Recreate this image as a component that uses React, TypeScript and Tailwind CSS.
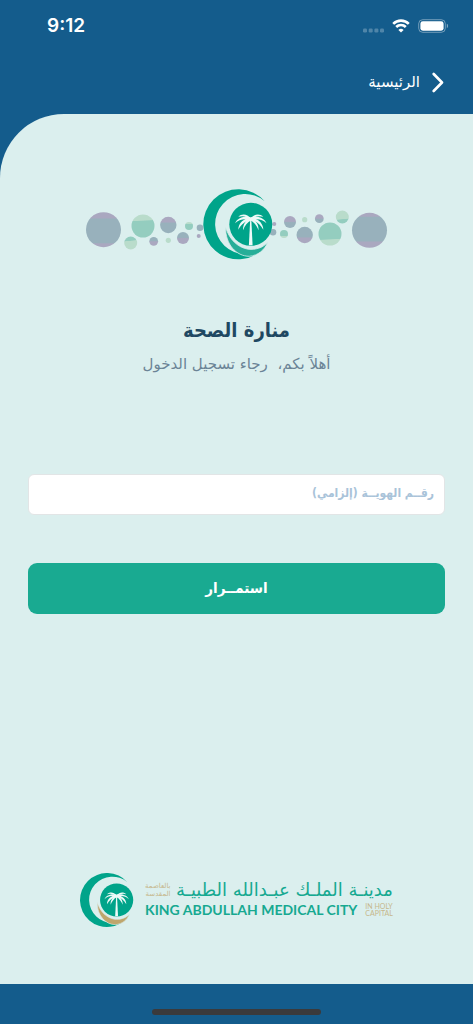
import { useState } from "react";
import type React from "react";

const arabicFont = "font-['DejaVu_Sans',sans-serif]";
const arabicCondensed = "font-['DejaVu_Sans_Condensed','DejaVu_Sans',sans-serif]";

function StatusBar() {
  return (
    <div dir="ltr" className="flex h-[52px] items-center justify-between pl-[47px] pr-6 text-white">
      <span className="font-['Inter',sans-serif] text-[19px] font-semibold leading-6">9:12</span>
      <div className="flex items-center gap-2">
        <svg width="22" height="14" viewBox="0 0 22 14" fill="#fff" fillOpacity="0.25" aria-hidden="true">
          <rect x="1" y="9.500" width="4" height="4" rx="1.2" />
          <rect x="6.700" y="9.500" width="4" height="4" rx="1.2" />
          <rect x="12.400" y="9.500" width="4" height="4" rx="1.2" />
          <rect x="18" y="9.500" width="4" height="4" rx="1.2" />
        </svg>
        <svg width="18" height="14" viewBox="0 0 18 14" fill="none" stroke="#fff" aria-hidden="true">
          <path d="M1.2 4.9a11 11 0 0 1 15.6 0" strokeWidth="2.6" />
          <path d="M4.2 8a6.8 6.8 0 0 1 9.6 0" strokeWidth="2.6" />
          <path d="M9 13.6 6.4 11a3.7 3.7 0 0 1 5.2 0Z" fill="#fff" stroke="none" />
        </svg>
        <svg width="31" height="14" viewBox="0 0 31 14" aria-hidden="true">
          <rect x="0.7" y="0.7" width="26.6" height="12.6" rx="4" fill="none" stroke="#fff" strokeOpacity="0.4" />
          <rect x="2.4" y="2.3" width="23.2" height="9.4" rx="2.4" fill="#fff" />
          <path d="M28.8 4.8c1.7.6 1.7 3.8 0 4.4Z" fill="#fff" fillOpacity="0.45" />
        </svg>
      </div>
    </div>
  );
}

// Crescent, disc and palm on a 70x70 grid
function EmblemShapes({ swoosh }: { swoosh: string }) {
  return (
    <>
      <path d="M61.4 12A35 35 0 1 0 63 56A30 30 0 1 1 61.4 12Z" fill="#00a48a" />
      <path d="M22.3 38C22 55 33 67 46 67C55 66 61 61 64.5 53C59 59 52 60.500 45 60C34 58 26 50 22.300 38Z" fill={swoosh} stroke="#dbefee" strokeWidth="0.8" />
      <circle cx="47.500" cy="35" r="21.500" fill="#00a48a" />
      <g fill="#eefaf8">
        <path d="M46.900 30h1.100l1.300 26h-3.700Z" />
        <path d="M47.500 29C44 24.500 38.500 24 35 27.500C39.500 26 43.500 27 47.500 30.500Z" />
        <path d="M47.500 28C43 26.500 34 27.500 31.800 34C36 29.500 42 29 47.500 31Z" />
        <path d="M47 28.500C41 29 35 33.500 35 40.500C38 35 42 31.500 47.500 31Z" />
        <path d="M47.300 29C42.500 31 39.500 35 39.700 41C41.500 36.500 44 33 48 31Z" />
        <path d="M47.500 29C51 24.500 56.500 24 60 27.500C55.500 26 51.500 27 47.500 30.500Z" />
        <path d="M47.500 28C52 26.500 61 27.500 63.200 34C59 29.500 53 29 47.500 31Z" />
        <path d="M48 28.500C54 29 60 33.500 60 40.500C57 35 53 31.500 47.500 31Z" />
        <path d="M47.700 29C52.500 31 55.500 35 55.300 41C53.500 36.500 51 33 47 31Z" />
      </g>
    </>
  );
}

function BubbleTrail() {
  return (
    <>
      <circle cx="17.500" cy="40.700" r="17.500" fill="url(#bigBubble)" />
      <circle cx="57" cy="37" r="11.500" fill="url(#greenBubble)" />
      <circle cx="44.700" cy="54" r="6.500" fill="url(#limeBubble)" />
      <circle cx="82.300" cy="36" r="8.200" fill="url(#greyBubble)" />
      <circle cx="67.700" cy="52.300" r="4.400" fill="url(#mauveBubble)" />
      <circle cx="82.300" cy="51.300" r="2.600" fill="#b9dccb" />
      <circle cx="97" cy="49" r="6" fill="url(#mauveBubble)" />
      <circle cx="103" cy="37" r="4" fill="url(#greenBubble)" />
      <circle cx="114" cy="38.700" r="3.300" fill="#98b1bc" />
      <circle cx="112.700" cy="47" r="2" fill="#aaa8c0" />
    </>
  );
}

function BubbleBanner() {
  return (
    <svg width="302" height="71" viewBox="0 0 302 71" role="img" aria-label="منارة الصحة">
      <defs>
        <linearGradient id="bigBubble" x1="0" y1="0" x2="0" y2="1">
          <stop offset="0.17" stopColor="#aaa8c0" />
          <stop offset="0.19" stopColor="#98b1bc" />
          <stop offset="0.88" stopColor="#98b1bc" />
          <stop offset="0.9" stopColor="#aaa8c0" />
        </linearGradient>
        <linearGradient id="greenBubble" x1="0" y1="0" x2="0.04" y2="1">
          <stop offset="0.27" stopColor="#b9dccb" />
          <stop offset="0.3" stopColor="#94cdbf" />
        </linearGradient>
        <linearGradient id="limeBubble" x1="0" y1="0" x2="0.1" y2="1">
          <stop offset="0.35" stopColor="#94cdbf" />
          <stop offset="0.4" stopColor="#b9dccb" />
        </linearGradient>
        <linearGradient id="greyBubble" x1="0" y1="0" x2="0" y2="1">
          <stop offset="0.33" stopColor="#aaa8c0" />
          <stop offset="0.37" stopColor="#98b1bc" />
        </linearGradient>
        <linearGradient id="mauveBubble" x1="0" y1="0" x2="0" y2="1">
          <stop offset="0.45" stopColor="#98b1bc" />
          <stop offset="0.55" stopColor="#aaa8c0" />
        </linearGradient>
      </defs>
      <BubbleTrail />
      <g transform="rotate(180 150.500 41)">
        <BubbleTrail />
      </g>
      <g transform="translate(117.300 0.300)">
        <EmblemShapes swoosh="#27ae98" />
      </g>
    </svg>
  );
}

function HospitalLogo() {
  return (
    <div dir="ltr" className="flex items-center justify-center gap-[11px]">
      <svg width="54" height="54" viewBox="0 0 70 70" aria-hidden="true">
        <EmblemShapes swoosh="#bfa66d" />
      </svg>
      <div className="flex flex-col">
        <div dir="rtl" className="flex items-center justify-between">
          <span className={`${arabicFont} whitespace-nowrap text-[18px] leading-5 text-[#16a991]`}>
            مدينـة الملـك عبـدالله الطبيـة
          </span>
          <span className={`${arabicFont} whitespace-nowrap text-[7px] leading-[8px] text-[#c6b78c]`}>
            بالعاصمة
            <br />
            المقدسة
          </span>
        </div>
        <div className="flex items-center gap-2">
          <span className="whitespace-nowrap font-['Lato',sans-serif] text-[14px] font-bold leading-5 text-[#16a991]">
            KING ABDULLAH MEDICAL CITY
          </span>
          <span className="whitespace-nowrap font-['Lato',sans-serif] text-[7px] leading-[7px] text-[#c6b78c]">
            IN HOLY
            <br />
            CAPITAL
          </span>
        </div>
      </div>
    </div>
  );
}

export default function App() {
  const [idNumber, setIdNumber] = useState("");

  const handleSubmit = (e: React.FormEvent) => {
    e.preventDefault();
  };

  return (
    <div dir="rtl" lang="ar" className={`${arabicFont} flex min-h-screen flex-col bg-[#145c8c]`}>
      <header className="h-[114px]">
        <StatusBar />
        <nav className="flex h-[60px] items-center pr-[29px]">
          <a href="#home" className="flex items-center gap-3 text-white">
            <svg width="12" height="21" viewBox="0 0 12 21" fill="none" stroke="#fff" strokeWidth="2.6" strokeLinecap="round" strokeLinejoin="round" aria-hidden="true">
              <path d="M1.700 2 10 10.500 1.700 19" />
            </svg>
            <span className="text-[15px] leading-6">الرئيسية</span>
          </a>
        </nav>
      </header>

      <main className="flex flex-1 flex-col rounded-tl-[64px] bg-[#dbefee] px-7 pb-[57px] pt-[75px]">
        <div className="flex justify-center">
          <BubbleBanner />
        </div>

        <div className="mt-[54px] text-center">
          <h1 className={`${arabicCondensed} text-[20px] font-bold leading-8 text-[#1f4862]`}>منارة الصحة</h1>
          <p className="mt-1 whitespace-pre text-[15px] leading-7 text-[#6b8496]">أهلاً بكم،  رجاء تسجيل الدخول</p>
        </div>

        <form onSubmit={handleSubmit} className="mt-24">
          <input
            type="text"
            aria-label="رقم الهوية"
            placeholder="رقــم الهويــة (إلزامي)"
            value={idNumber}
            onChange={(e) => setIdNumber(e.target.value)}
            className={`${arabicCondensed} block h-[41px] w-full rounded-md border border-[#e2e5e6] bg-white px-[10px] pb-1 text-[12px] font-bold text-[#145c8c] outline-none placeholder:text-[#a9c3d9]`}
          />
          <button
            type="submit"
            className={`${arabicCondensed} mt-12 h-[51px] w-full rounded-[9px] bg-[#19aa91] text-[15px] font-bold text-white`}
          >
            استمــرار
          </button>
        </form>

        <div className="mt-auto pt-12">
          <HospitalLogo />
        </div>
      </main>

      <footer className="flex h-10 items-end justify-center pb-[9px]">
        <div className="h-[6px] w-[169px] rounded-full bg-[#3a3a3c]" />
      </footer>
    </div>
  );
}
